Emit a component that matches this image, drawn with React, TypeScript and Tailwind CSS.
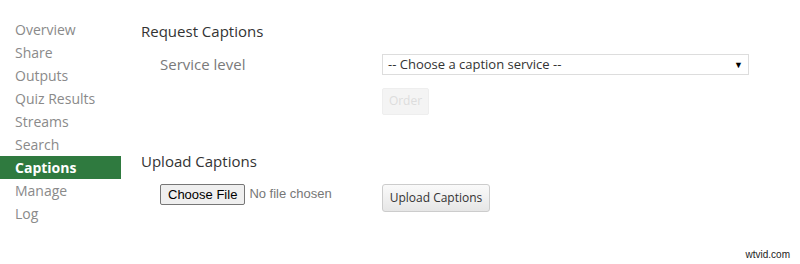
const navItems = ['Overview', 'Share', 'Outputs', 'Quiz Results', 'Streams', 'Search', 'Captions', 'Manage', 'Log'];

export default function App() {
  return (
    <div className="relative w-[800px] h-[264px] bg-white flex font-['Open_Sans',sans-serif] overflow-hidden">
      <nav className="w-[121px] pt-[18px] flex flex-col">
        {navItems.map((item) => (
          <div
            key={item}
            className={
              item === 'Captions'
                ? 'h-[23px] pl-[15px] leading-[23px] text-[14px] font-bold text-white bg-[#2f7a3f]'
                : 'h-[23px] pl-[15px] leading-[23px] text-[14px] text-[#8a8a8a]'
            }
          >
            {item}
          </div>
        ))}
      </nav>

      <main className="flex-1 pl-[20px] pt-[20px]">
        <h2 className="text-[15px] leading-[22px] text-[#333]">Request Captions</h2>
        <div className="flex items-center mt-[11px]">
          <div className="w-[241px] pl-[19px] text-[15px] text-[#7a7a7a]">Service level</div>
          <div className="w-[367px] h-[21px] border border-[#ddd] flex items-center justify-between px-[5px] text-[13px] text-[#333]">
            <span>-- Choose a caption service --</span>
            <span className="text-[9px] text-black">▼</span>
          </div>
        </div>
        <div className="flex mt-[12px] pl-[241px]">
          <button className="w-[47px] h-[27px] rounded-[2px] bg-[#f4f4f4] border border-[#eee] text-[12px] text-[#ddd]">
            Order
          </button>
        </div>

        <h2 className="text-[15px] leading-[22px] text-[#333] mt-[35px]">Upload Captions</h2>
        <div className="flex items-start mt-[12px]">
          <div className="w-[241px] pl-[19px] flex items-center">
            <button className="h-[21px] px-[7px] bg-[#efefef] border border-[#767676] rounded-[2px] text-[13px] text-black font-['Liberation_Sans',sans-serif]">
              Choose File
            </button>
            <span className="ml-[4px] text-[13px] text-[#777] font-['Liberation_Sans',sans-serif]">No file chosen</span>
          </div>
          <button className="w-[108px] h-[28px] bg-gradient-to-b from-[#fafafa] to-[#e6e6e6] border border-[#ccc] rounded-[3px] text-[12px] text-[#333]">
            Upload Captions
          </button>
        </div>
      </main>

      <div className="absolute right-[10px] bottom-[2px] text-[10px] text-[#222] font-['Liberation_Sans',sans-serif]">wtvid.com</div>
    </div>
  );
}
